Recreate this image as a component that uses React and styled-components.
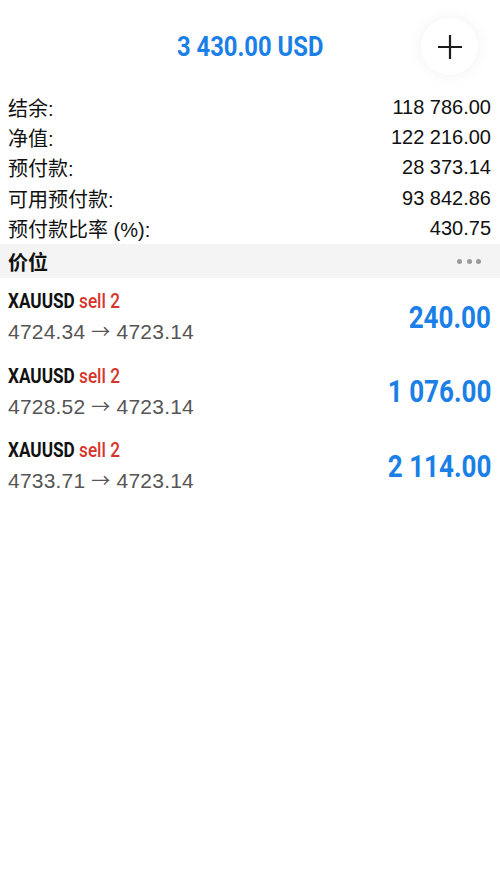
import React from 'react';
import styled, { createGlobalStyle } from 'styled-components';

const GlobalStyle = createGlobalStyle`
    body {
        margin: 0;
        background: #fff;
        font-family: "Liberation Sans", "Noto Sans CJK SC", sans-serif;
        color: #111;
    }
`

const Page = styled.div`
    width: 500px;
    min-height: 892px;
    background: #fff;
`

// condensed bold face, squeezed from Roboto
const Condensed = styled.span`
    display: inline-block;
    font-family: Roboto, "Noto Sans CJK SC", sans-serif;
    font-weight: 700;
    white-space: nowrap;
    transform: scaleX(${p => p.scale || 0.85});
    transform-origin: ${p => p.origin || 'center'};
`

const Header = styled.header`
    display: grid;
    grid-template-columns: 1fr auto 1fr;
    align-items: center;
    padding: 18px 0 17px;
`

const Title = styled.h1`
    grid-column: 2;
    margin: 0;
    font-size: 28px;
    font-weight: 700;
    color: #1a7fe6;
`

const AddButton = styled.button`
    grid-column: 3;
    justify-self: end;
    margin-right: 22px;
    width: 57px;
    height: 57px;
    border: none;
    border-radius: 50%;
    background: #fff;
    box-shadow: 0 0 16px rgba(0, 0, 0, 0.06);
    display: flex;
    align-items: center;
    justify-content: center;
    padding: 0;
`

const Summary = styled.div`
    display: flex;
    flex-direction: column;
`

const SummaryRow = styled.div`
    display: flex;
    justify-content: space-between;
    align-items: center;
    height: 30.3px;
    padding: 0 9px 0 8px;
    font-size: 20px;
    color: #111;
`

const Section = styled.div`
    display: flex;
    justify-content: space-between;
    align-items: center;
    height: 34px;
    margin-top: 1px;
    padding: 0 19px 0 8px;
    background: #f4f4f4;
    font-size: 20px;
    font-weight: 700;
`

const Dots = styled.div`
    display: flex;
    gap: 4.5px;
`

const Dot = styled.span`
    width: 5px;
    height: 5px;
    border-radius: 50%;
    background: #9a9a9a;
`

const Position = styled.div`
    display: flex;
    justify-content: space-between;
    align-items: center;
    padding: 11px 9px 7.5px 8px;
`

const Info = styled.div`
    display: flex;
    flex-direction: column;
    align-items: flex-start;
`

const Symbol = styled.div`
    font-size: 20px;
    line-height: 24px;
    color: #111;
`

const Side = styled.span`
    font-weight: 500;
    color: ${p => p.sell ? '#d6352c' : '#1a7fe6'};
`

const Prices = styled.div`
    margin-top: 6px;
    height: 26px;
    font-size: 21px;
    line-height: 26px;
    letter-spacing: 0.2px;
    color: #555;
`

const Arrow = styled.span`
    font-family: "Noto Sans CJK SC", sans-serif;
    font-size: 19px;
    line-height: 1;
`

const Profit = styled.div`
    font-size: 31px;
    color: #1a7fe6;
`

const summary = [
    ['结余:', '118 786.00'],
    ['净值:', '122 216.00'],
    ['预付款:', '28 373.14'],
    ['可用预付款:', '93 842.86'],
    ['预付款比率 (%):', '430.75'],
];

const positions = [
    { open: '4724.34', current: '4723.14', profit: '240.00' },
    { open: '4728.52', current: '4723.14', profit: '1 076.00' },
    { open: '4733.71', current: '4723.14', profit: '2 114.00' },
];

const App = () => {
    return (
        <Page>
            <GlobalStyle />
            <Header>
                <Title><Condensed scale={0.85}>3 430.00 USD</Condensed></Title>
                <AddButton>
                    <svg width="24" height="24" viewBox="0 0 24 24">
                        <path d="M12 0v24M0 12h24" stroke="#1c1c1c" strokeWidth="2.2" />
                    </svg>
                </AddButton>
            </Header>
            <Summary>
                {summary.map(([label, value]) => (
                    <SummaryRow key={label}>
                        <span>{label}</span>
                        <span>{value}</span>
                    </SummaryRow>
                ))}
            </Summary>
            <Section>
                <span>价位</span>
                <Dots><Dot /><Dot /><Dot /></Dots>
            </Section>
            {positions.map((p, i) => (
                <Position key={i}>
                    <Info>
                        <Symbol>
                            <Condensed scale={0.86} origin="left">XAUUSD <Side sell>sell 2</Side></Condensed>
                        </Symbol>
                        <Prices>{p.open} <Arrow>→</Arrow> {p.current}</Prices>
                    </Info>
                    <Profit><Condensed scale={0.84} origin="right">{p.profit}</Condensed></Profit>
                </Position>
            ))}
        </Page>
    )
}

export default App;
